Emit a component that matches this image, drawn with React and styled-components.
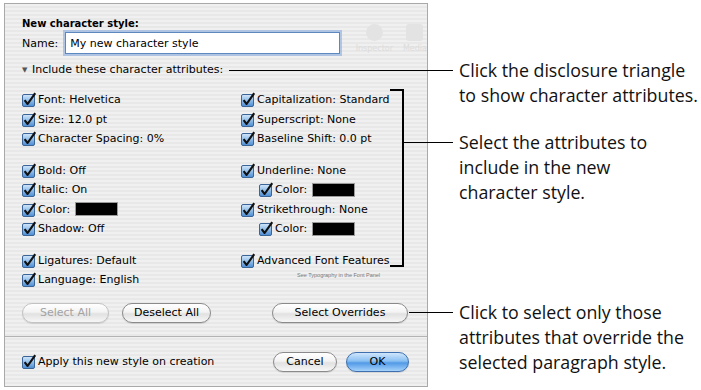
import React from 'react';
import styled, { createGlobalStyle } from 'styled-components';

const GlobalStyle = createGlobalStyle`
  html, body {
    margin: 0;
    padding: 0;
    background: #ffffff;
  }
  body {
    font-family: 'DejaVu Sans', 'Lucida Grande', sans-serif;
  }
`;

const Page = styled.div`
  display: flex;
  width: 701px;
  height: 390px;
  padding: 3px 0 0 4px;
  box-sizing: border-box;
  overflow: hidden;
`;

const Dialog = styled.div`
  position: relative;
  flex: none;
  width: 424px;
  height: 384px;
  box-sizing: border-box;
  border: 1px solid #a9a9a9;
  background: repeating-linear-gradient(
    to bottom,
    #f0f0f0 0px,
    #f0f0f0 2px,
    #e8e8e8 2px,
    #e8e8e8 4px
  );
  display: flex;
  flex-direction: column;
  font-size: 11px;
  color: #000;
`;

/* faint toolbar of the window behind the sheet */
const Ghost = styled.div`
  position: absolute;
  top: 20px;
  right: 0;
  display: flex;
  gap: 10px;
  color: #dcdcdc;
  font-size: 8px;
  pointer-events: none;
`;

const GhostTool = styled.div`
  display: flex;
  flex-direction: column;
  align-items: center;
  gap: 3px;
`;

const GhostIcon = styled.div`
  width: 17px;
  height: 17px;
  border-radius: ${(p) => (p.$square ? '3px' : '50%')};
  background: #e3e3e3;
`;

const Main = styled.div`
  height: 332px;
  box-sizing: border-box;
  padding: 12px 0 0 17px;
`;

const Title = styled.div`
  font-weight: bold;
  font-size: 10px;
  line-height: 16px;
`;

const NameRow = styled.div`
  display: flex;
  align-items: center;
  height: 22px;
`;

const NameInput = styled.input`
  margin-left: 7px;
  width: 275px;
  height: 22px;
  box-sizing: border-box;
  border: 1px solid #5d87bf;
  box-shadow: 0 0 0 2px rgba(125, 165, 220, 0.55);
  background: #fff;
  padding: 0 4px;
  font-family: inherit;
  font-size: 11px;
  color: #000;
  outline: none;
`;

const Disclosure = styled.div`
  display: flex;
  align-items: center;
  margin-top: 8px;
  line-height: 16px;
`;

const Triangle = styled.span`
  font-size: 7px;
  color: #555;
  width: 10px;
`;

const Columns = styled.div`
  display: grid;
  grid-template-columns: 219px 1fr;
  margin-top: 12px;
`;

const Column = styled.div`
  position: relative;
`;

const Group = styled.div`
  & + & {
    margin-top: 12px;
  }
`;

const Row = styled.div`
  display: flex;
  align-items: center;
  height: 19.5px;
  padding-left: ${(p) => p.$indent || 0}px;
  white-space: nowrap;
`;

const Note = styled.div`
  padding-left: 56px;
  font-family: 'Liberation Sans', Arial, sans-serif;
  font-size: 5.5px;
  line-height: 10px;
  color: #7a7a7a;
  white-space: nowrap;
`;

const Swatch = styled.span`
  display: inline-block;
  width: 43px;
  height: 14px;
  margin-left: 5px;
  box-sizing: border-box;
  background: #000;
  border: 1px solid #9a9a9a;
`;

const Bracket = styled.div`
  position: absolute;
  top: -1px;
  left: 149px;
  width: 14px;
  height: 178px;
  box-sizing: border-box;
  border: 2px solid #000;
  border-left: none;
`;

const ButtonRow = styled.div`
  display: flex;
  gap: 13px;
  margin-top: 13px;
  padding-left: ${(p) => p.$offset || 0}px;
`;

const Button = styled.button`
  width: ${(p) => p.$w}px;
  height: 20px;
  padding: 0;
  border-radius: 10px;
  border: 1px solid ${(p) => (p.$primary ? '#3f6fad' : p.disabled ? '#c2c2c2' : '#8a8a8a')};
  background: ${(p) =>
    p.$primary
      ? 'linear-gradient(to bottom, #cfe6fc 0%, #89bff2 45%, #5199e6 55%, #a5d3fb 100%)'
      : 'linear-gradient(to bottom, #ffffff 0%, #f3f3f3 45%, #e1e1e1 55%, #f7f7f7 100%)'};
  box-shadow: 0 1px 1px rgba(0, 0, 0, 0.12);
  font-family: inherit;
  font-size: 11px;
  color: ${(p) => (p.disabled ? '#a3a3a3' : '#000')};
`;

const Separator = styled.div`
  height: 1px;
  background: #b3b3b3;
`;

const Footer = styled.div`
  flex: 1;
  display: flex;
  align-items: center;
  gap: 9px;
  padding: 0 18px 0 17px;
`;

const Spacer = styled.div`
  flex: 1;
`;

const Callouts = styled.div`
  display: flex;
  flex-direction: column;
  margin-left: 31px;
  font-family: 'Open Sans', 'Noto Sans', sans-serif;
  font-size: 17.8px;
  line-height: 25px;
  color: #111;
  white-space: nowrap;
`;

const Callout = styled.div`
  position: relative;
  margin-top: ${(p) => p.$gap}px;

  &::before {
    content: '';
    position: absolute;
    top: 12px;
    left: ${(p) => -p.$lead}px;
    width: ${(p) => p.$lead - 6}px;
    height: 1px;
    background: #000;
  }
`;

function CheckBox() {
  return (
    <svg width="14" height="15" viewBox="0 0 14 15" style={{ marginRight: 2, flex: 'none' }}>
      <defs>
        <linearGradient id="cb" x1="0" y1="0" x2="0" y2="1">
          <stop offset="0" stopColor="#d4e7fa" />
          <stop offset="0.5" stopColor="#8fbde9" />
          <stop offset="1" stopColor="#4a8ad3" />
        </linearGradient>
      </defs>
      <rect x="0.5" y="2.5" width="12" height="12" rx="1.5" fill="url(#cb)" stroke="#3c6597" />
      <path d="M2.6 8.2 L5.6 12 L13.2 1.2" fill="none" stroke="#111" strokeWidth="2.1" strokeLinejoin="round" />
    </svg>
  );
}

function Check({ children, indent }) {
  return (
    <Row $indent={indent}>
      <CheckBox />
      {children}
    </Row>
  );
}

export default function App() {
  return (
    <>
      <GlobalStyle />
      <Page>
        <Dialog>
          <Ghost>
            <GhostTool>
              <GhostIcon />
              Inspector
            </GhostTool>
            <GhostTool>
              <GhostIcon $square />
              Media
            </GhostTool>
          </Ghost>
          <Main>
            <Title>New character style:</Title>
            <NameRow>
              Name:
              <NameInput defaultValue="My new character style" />
            </NameRow>
            <Disclosure>
              <Triangle>▼</Triangle>
              Include these character attributes:
            </Disclosure>
            <Columns>
              <Column>
                <Group>
                  <Check>Font: Helvetica</Check>
                  <Check>Size:  12.0 pt</Check>
                  <Check>Character Spacing:  0%</Check>
                </Group>
                <Group>
                  <Check>Bold:  Off</Check>
                  <Check>Italic:  On</Check>
                  <Check>
                    Color: <Swatch />
                  </Check>
                  <Check>Shadow: Off</Check>
                </Group>
                <Group>
                  <Check>Ligatures:  Default</Check>
                  <Check>Language:  English</Check>
                </Group>
              </Column>
              <Column>
                <Group>
                  <Check>Capitalization:  Standard</Check>
                  <Check>Superscript:  None</Check>
                  <Check>Baseline Shift:  0.0 pt</Check>
                </Group>
                <Group>
                  <Check>Underline:  None</Check>
                  <Check indent={18}>
                    Color: <Swatch />
                  </Check>
                  <Check>Strikethrough:  None</Check>
                  <Check indent={18}>
                    Color: <Swatch />
                  </Check>
                </Group>
                <Group>
                  <Check>Advanced Font Features</Check>
                  <Note>See Typography in the Font Panel</Note>
                </Group>
                <Bracket />
              </Column>
              <ButtonRow>
                <Button $w={87} disabled>
                  Select All
                </Button>
                <Button $w={89}>Deselect All</Button>
              </ButtonRow>
              <ButtonRow $offset={31}>
                <Button $w={136}>Select Overrides</Button>
              </ButtonRow>
            </Columns>
          </Main>
          <Separator />
          <Footer>
            <Check>Apply this new style on creation</Check>
            <Spacer />
            <Button $w={64}>Cancel</Button>
            <Button $w={63} $primary>
              OK
            </Button>
          </Footer>
        </Dialog>
        <Callouts>
          <Callout $gap={54.5} $lead={230}>
            Click the disclosure triangle
            <br />
            to show character attributes.
          </Callout>
          <Callout $gap={22} $lead={55}>
            Select the attributes to
            <br />
            include in the new
            <br />
            character style.
          </Callout>
          <Callout $gap={95} $lead={50}>
            Click to select only those
            <br />
            attributes that override the
            <br />
            selected paragraph style.
          </Callout>
        </Callouts>
      </Page>
    </>
  );
}
